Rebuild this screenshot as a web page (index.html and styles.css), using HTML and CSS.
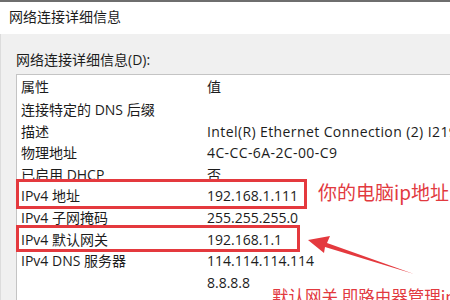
FILE: index.html
```html
<!DOCTYPE html>
<html lang="zh-CN">
<head>
  <meta charset="UTF-8" />
  <title>网络连接详细信息</title>
  <link rel="stylesheet" href="styles.css">
</head>
<body>
  <div class="dialog">
    <div class="titlebar">网络连接详细信息</div>
    <div class="content">
      <div class="label">网络连接详细信息(D):</div>
      <div class="listbox">
        <div class="row head"><span>属性</span><span>值</span></div>
        <div class="row"><span>连接特定的 DNS 后缀</span><span></span></div>
        <div class="row"><span>描述</span><span class="wide">Intel(R) Ethernet Connection (2) I219-V</span></div>
        <div class="row"><span>物理地址</span><span class="wide">4C-CC-6A-2C-00-C9</span></div>
        <div class="row"><span>已启用 DHCP</span><span>否</span></div>
        <div class="row"><span>IPv4 地址</span><span>192.168.1.111</span></div>
        <div class="row"><span>IPv4 子网掩码</span><span>255.255.255.0</span></div>
        <div class="row"><span>IPv4 默认网关</span><span>192.168.1.1</span></div>
        <div class="row"><span>IPv4 DNS 服务器</span><span>114.114.114.114</span></div>
        <div class="row"><span></span><span>8.8.8.8</span></div>
      </div>
    </div>

    <!-- annotations drawn over the screenshot -->
    <div class="mark mark-ip"></div>
    <div class="mark mark-gw"></div>
    <div class="note note-ip">你的电脑ip地址</div>
    <div class="note note-gw">默认网关 即路由器管理ip地址</div>
    <svg class="arrow" width="450" height="300" viewBox="0 0 450 300">
      <polygon points="308,240 330,236 327,243 414,274 325,247 324,253" />
    </svg>
  </div>
</body>
</html>
```

FILE: styles.css
```css
body {
  margin: 0;
  font-family: "Open Sans", "Noto Sans CJK SC", sans-serif;
  color: #1c1c1c;
  background: #f0f0f0;
}
.dialog {
  position: relative;
  width: 450px;
  height: 300px;
  overflow: hidden;
  border-top: 2px solid #6e6e6e;
  box-sizing: border-box;
}
.titlebar {
  height: 32px;
  line-height: 30px;
  padding-left: 9px;
  font-size: 14px;
  background: #fff;
}
.content {
  background: #f0f0f0;
  padding-left: 15px;
  border-left: 1px solid #dcdcdc;
  height: 300px;
}
.label {
  padding-top: 16px;
  line-height: 20px;
  font-size: 14px;
  height: 24px;
}
.listbox {
  background: #fff;
  border-top: 1px solid #c4c4c4;
  border-left: 1px solid #c4c4c4;
  height: 300px;
}
.row {
  display: grid;
  grid-template-columns: 190px 1fr;
  height: 21.6px;
  line-height: 21.6px;
  font-size: 14px;
  white-space: nowrap;
  overflow: hidden;
}
.row.head {
  height: 24px;
  line-height: 24px;
}
.row span:first-child {
  padding-left: 4px;
}
.row .wide {
  letter-spacing: 0.4px;
}
.mark {
  position: absolute;
  box-sizing: border-box;
  border: 3px solid #e4393e;
}
.mark-ip {
  left: 16px;
  top: 177px;
  width: 291px;
  height: 30px;
}
.mark-gw {
  left: 16px;
  top: 223px;
  width: 284px;
  height: 27px;
}
.note {
  position: absolute;
  font-family: "Noto Sans CJK SC", sans-serif;
  font-size: 19px;
  line-height: 24px;
  color: #e23a3f;
  white-space: nowrap;
}
.note-ip {
  left: 318px;
  top: 178px;
}
.note-gw {
  left: 272px;
  top: 282px;
  font-size: 16.5px;
}
.arrow {
  position: absolute;
  left: 0;
  top: -2px;
}
.arrow polygon {
  fill: #e4393e;
}
```
